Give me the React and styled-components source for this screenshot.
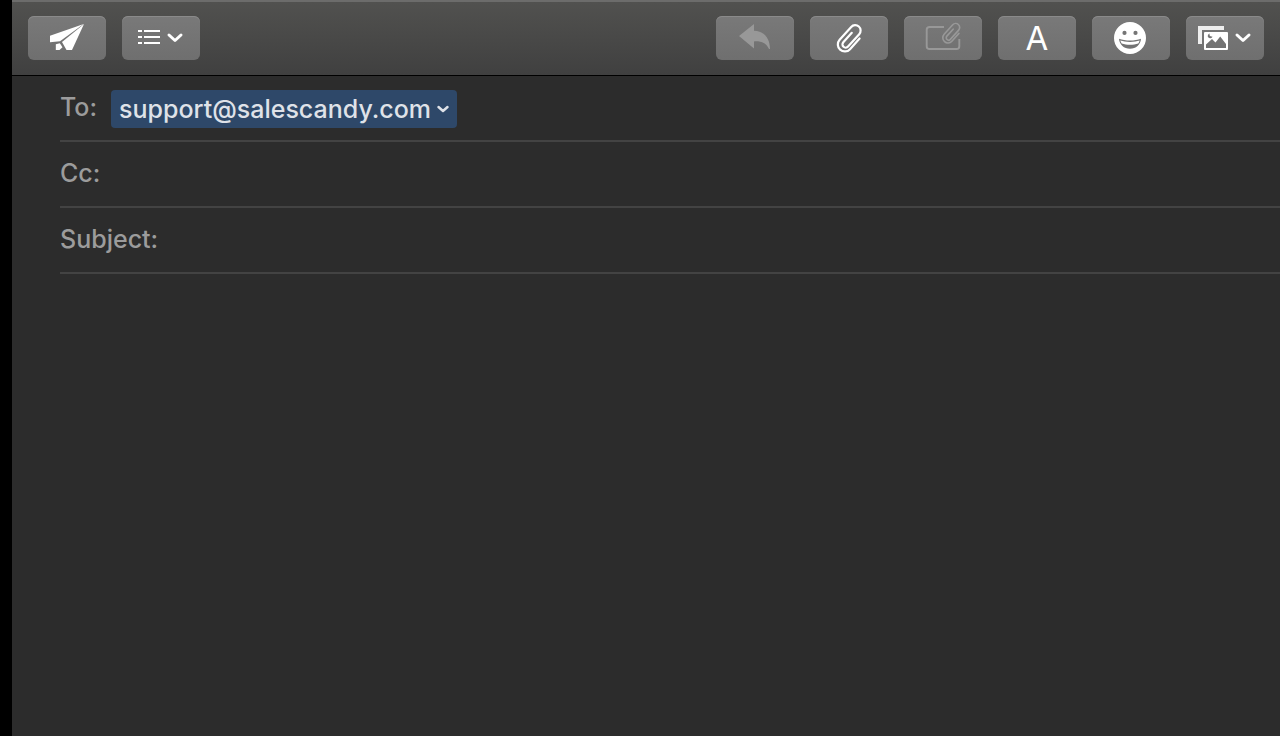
// src/App.jsx

import React from 'react';
import styled, { createGlobalStyle, ThemeProvider } from 'styled-components';

const theme = {
  backdrop: '#000000',
  surface: '#2c2c2c',
  divider: '#434343',
  label: '#9c9c9c',
  text: '#dfe2e8',
  chip: '#2e4869',
  icon: '#ffffff',
  iconDisabled: '#989898',
};

const GlobalStyle = createGlobalStyle`
  * {
    box-sizing: border-box;
  }

  body {
    margin: 0;
    background: ${({ theme }) => theme.backdrop};
    font-family: Inter, 'Liberation Sans', sans-serif;
  }
`;

// Compose window
const Window = styled.form`
  display: flex;
  flex-direction: column;
  min-height: 100vh;
  margin-left: 12px;
  background: ${({ theme }) => theme.surface};
`;

// Toolbar
const Toolbar = styled.header`
  display: flex;
  justify-content: space-between;
  padding: 14px 16px 15px;
  background: linear-gradient(#51514f, #404040);
  border-top: 2px solid #6c6c6b;
  border-bottom: 1px solid #000000;
`;

const ButtonGroup = styled.div`
  display: flex;
  gap: 16px;
`;

const ToolButton = styled.button`
  display: flex;
  align-items: center;
  justify-content: center;
  width: 78px;
  height: 44px;
  padding: 0;
  border: 0;
  border-radius: 6px;
  background: linear-gradient(#797979, #6f6f6f);
  box-shadow: inset 0 1px 0 #8a8a8a;
  color: ${({ theme }) => theme.icon};
  font-family: inherit;
  font-size: 33px;
  line-height: 44px;

  &:disabled {
    color: ${({ theme }) => theme.iconDisabled};
  }
`;

// Header fields
const Fields = styled.div`
  padding-left: 48px;
`;

const Field = styled.div`
  display: flex;
  align-items: center;
  height: 66px;
  padding-top: 2px;
  border-bottom: 2px solid ${({ theme }) => theme.divider};
`;

const Label = styled.label`
  padding-bottom: 4px;
  color: ${({ theme }) => theme.label};
  font-size: 25px;
  font-weight: 500;
  line-height: 32px;
`;

const Input = styled.input`
  flex: 1;
  min-width: 0;
  padding: 0 12px;
  border: 0;
  outline: 0;
  background: transparent;
  color: ${({ theme }) => theme.text};
  font-family: inherit;
  font-size: 25px;
`;

const Recipient = styled.button`
  display: flex;
  align-items: center;
  gap: 6px;
  height: 38px;
  margin-left: 14px;
  padding: 0 8px;
  border: 0;
  border-radius: 4px;
  background: ${({ theme }) => theme.chip};
  color: ${({ theme }) => theme.text};
  font-family: inherit;
  font-size: 25px;
  font-weight: 500;
  line-height: 38px;
`;

const Message = styled.textarea`
  flex: 1;
  padding: 16px 48px;
  border: 0;
  outline: 0;
  resize: none;
  background: transparent;
  color: ${({ theme }) => theme.text};
  font-family: inherit;
  font-size: 25px;
`;

// Every toolbar glyph is drawn on the full face of its button
function Glyph({ children }) {
  return (
    <svg width="78" height="44" viewBox="0 0 78 44" fill="currentColor" aria-hidden="true">
      {children}
    </svg>
  );
}

function Chevron({ x }) {
  return (
    <path
      d={`M${x} 19l6 5.5 6-5.5`}
      fill="none"
      stroke="currentColor"
      strokeWidth="3"
      strokeLinecap="round"
      strokeLinejoin="round"
    />
  );
}

function Clip({ transform }) {
  return (
    <path
      transform={transform}
      d="M8-6.500V7.800A7 7 0 0 1-6 7.800V-9.500A5.400 5.400 0 0 1 4.800-9.500V7.200A3.200 3.200 0 0 1-1.600 7.200V-5.500"
      fill="none"
      stroke="currentColor"
      strokeWidth="2.2"
      strokeLinecap="round"
    />
  );
}

function SendIcon() {
  return (
    <Glyph>
      <path d="M22 19.700L55.700 8 32 25.300 22 26.300z" />
      <path d="M56 8L44 34h-5.500L34 26z" />
      <path d="M27.800 28.200l4-.9 2.700 3.900-3 2.800h-3.700z" />
    </Glyph>
  );
}

function ListIcon() {
  return (
    <Glyph>
      <path d="M16 14h4v2h-4zM22 14h16v2H22zM16 20h4v2h-4zM22 20h16v2H22zM16 26h4v2h-4zM22 26h16v2H22z" />
      <Chevron x={47} />
    </Glyph>
  );
}

function ReplyIcon() {
  return (
    <Glyph>
      <path d="M23 20L38 8v6.700c10 .3 16 7.500 16 18.300h-1c-2.500-5.500-7-8-15-7.600v7z" />
    </Glyph>
  );
}

function AttachIcon() {
  return (
    <Glyph>
      <Clip transform="translate(39.300 22) rotate(42)" />
    </Glyph>
  );
}

function MarkupIcon() {
  return (
    <Glyph>
      <path
        d="M40 11H25.500a2.800 2.800 0 0 0-2.800 2.800V30.200a2.800 2.800 0 0 0 2.800 2.800h27a2.800 2.800 0 0 0 2.800-2.800V23"
        fill="none"
        stroke="currentColor"
        strokeWidth="1.900"
      />
      <Clip transform="translate(47.300 17) rotate(42) scale(.74)" />
    </Glyph>
  );
}

function EmojiIcon() {
  return (
    <Glyph>
      <path
        fillRule="evenodd"
        d="M38 6a16 16 0 1 1 0 32 16 16 0 0 1 0-32zM32.500 14.800a2.100 2.100 0 1 0 0 4.200 2.100 2.100 0 0 0 0-4.200zM43.500 14.800a2.100 2.100 0 1 0 0 4.200 2.100 2.100 0 0 0 0-4.200zM27 22.800c.5 6 5 10 11 10s10.500-4 11-10c-6 2.400-16 2.400-22 0z"
      />
      <path d="M28.300 24.600c5.500 1.800 14 1.800 19.400 0-.3 1.100-.8 2-1.400 2.800-5 1.800-11.600 1.800-16.600 0-.6-.8-1.100-1.700-1.400-2.800z" />
    </Glyph>
  );
}

function PhotosIcon() {
  return (
    <Glyph>
      <path d="M12 10h26v4H16v14h-4z" opacity=".88" />
      <path
        fillRule="evenodd"
        d="M19 16h22a1 1 0 0 1 1 1V33a1 1 0 0 1-1 1H19a1 1 0 0 1-1-1V17a1 1 0 0 1 1-1zM20 28.500V32h20v-4l-5.800-7.500-4.700 6-3.500-3.500zM23.600 17.500c-2.800 1-2.200 5 .8 4.700 1.200-.1 1.800-.8 2-1.800-2 .6-3.300-.9-2.800-2.900z"
      />
      <Chevron x={51} />
    </Glyph>
  );
}

function App() {
  return (
    <ThemeProvider theme={theme}>
      <GlobalStyle />
      <Window onSubmit={(e) => e.preventDefault()}>
        <Toolbar>
          <ButtonGroup>
            <ToolButton type="submit" aria-label="Send">
              <SendIcon />
            </ToolButton>
            <ToolButton type="button" aria-label="Header fields">
              <ListIcon />
            </ToolButton>
          </ButtonGroup>
          <ButtonGroup>
            <ToolButton type="button" aria-label="Reply" disabled>
              <ReplyIcon />
            </ToolButton>
            <ToolButton type="button" aria-label="Attach file">
              <AttachIcon />
            </ToolButton>
            <ToolButton type="button" aria-label="Include attachments" disabled>
              <MarkupIcon />
            </ToolButton>
            <ToolButton type="button" aria-label="Format">
              A
            </ToolButton>
            <ToolButton type="button" aria-label="Emoji">
              <EmojiIcon />
            </ToolButton>
            <ToolButton type="button" aria-label="Photos">
              <PhotosIcon />
            </ToolButton>
          </ButtonGroup>
        </Toolbar>

        <Fields>
          <Field>
            <Label htmlFor="to">To:</Label>
            <Recipient type="button">
              support@salescandy.com
              <svg width="12" height="8" viewBox="0 0 12 8" aria-hidden="true">
                <path
                  d="M1.500 2L6 6l4.500-4"
                  fill="none"
                  stroke="currentColor"
                  strokeWidth="2.400"
                  strokeLinecap="round"
                  strokeLinejoin="round"
                />
              </svg>
            </Recipient>
            <Input id="to" type="text" />
          </Field>
          <Field>
            <Label htmlFor="cc">Cc:</Label>
            <Input id="cc" type="text" />
          </Field>
          <Field>
            <Label htmlFor="subject">Subject:</Label>
            <Input id="subject" type="text" />
          </Field>
        </Fields>

        <Message aria-label="Message" />
      </Window>
    </ThemeProvider>
  );
}

export default App;
